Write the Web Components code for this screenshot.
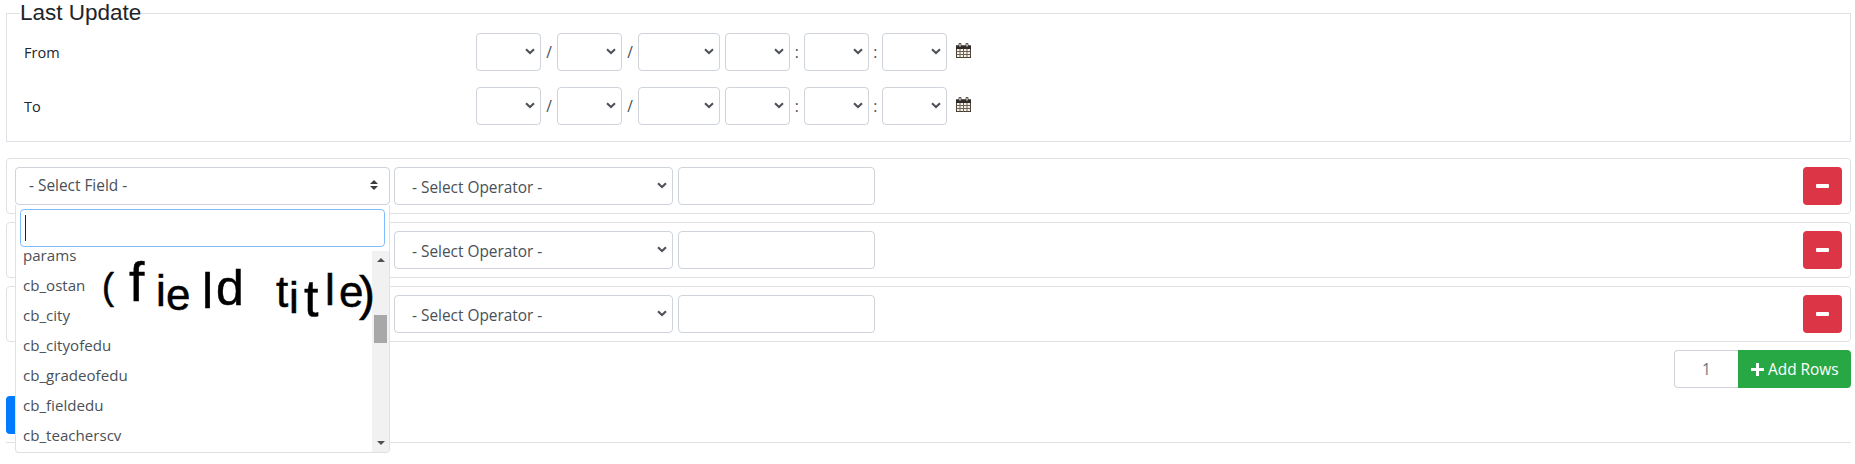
<!DOCTYPE html>
<html>
<head>
<meta charset="utf-8">
<title>Filter</title>
<style>
  html, body { margin: 0; background: #fff; }
  body { font-family: "Open Sans", "Noto Sans", sans-serif; font-size: 15.4px; color: #212529; width: 1855px; height: 464px; overflow: hidden; }
  .page { display: flex; flex-direction: column; padding: 0 4px 0 6px; }
</style>
</head>
<body>
<div class="page">
  <date-fieldset legend="Last Update">
    <date-row label="From"></date-row>
    <date-row label="To"></date-row>
  </date-fieldset>
  <filter-list>
    <filter-row open></filter-row>
    <filter-row></filter-row>
    <filter-row></filter-row>
  </filter-list>
  <add-rows></add-rows>
  <submit-bar></submit-bar>
</div>

<script>
const CHEVRON = `<svg width="10" height="7" viewBox="0 0 10 7"><path d="M1 1.2 L5 5 L9 1.2" fill="none" stroke="#4c5157" stroke-width="2"/></svg>`;

class PlainSelect extends HTMLElement {
  connectedCallback() {
    this.attachShadow({ mode: 'open' });
    const text = this.getAttribute('text') || '';
    this.shadowRoot.innerHTML = `
      <style>
        :host { display: flex; box-sizing: border-box; height: 38px; border: 1px solid #ced4da; border-radius: 4px;
          align-items: center; justify-content: space-between; padding: 0 5px 0 17px; color: #495057; background: #fff; }
        span { position: relative; top: 1px; }
        svg { display: block; position: relative; top: -1px; }
      </style>
      <span>${text}</span>${CHEVRON}`;
  }
}
customElements.define('plain-select', PlainSelect);

class DateFieldset extends HTMLElement {
  connectedCallback() {
    this.attachShadow({ mode: 'open' });
    this.shadowRoot.innerHTML = `
      <style>
        :host { display: block; }
        fieldset { margin: 0; padding: 7px 13px 0; border: 1px solid #dee2e6; min-width: 0; }
        legend { padding: 0; font-family: "Liberation Sans", sans-serif; font-size: 22.5px; line-height: 26px; color: #212529; }
      </style>
      <fieldset>
        <legend>${this.getAttribute('legend')}</legend>
        <slot></slot>
      </fieldset>`;
  }
}
customElements.define('date-fieldset', DateFieldset);

class DateRow extends HTMLElement {
  connectedCallback() {
    this.attachShadow({ mode: 'open' });
    this.shadowRoot.innerHTML = `
      <style>
        :host { display: flex; align-items: center; height: 38px; margin-bottom: 16px; }
        label { width: 456px; padding-left: 4px; box-sizing: border-box; font-size: 14.5px; }
        plain-select { width: 65px; flex: none; }
        plain-select.y { width: 82px; margin-right: 5px; }
        .sep { flex: none; width: 16px; text-align: center; color: #495057; }
        .sep.c { width: 13.5px; }
        svg { margin: -3px 0 0 9px; display: block; }
      </style>
      <label>${this.getAttribute('label')}</label>
      <plain-select></plain-select><span class="sep">/</span>
      <plain-select></plain-select><span class="sep">/</span>
      <plain-select class="y"></plain-select>
      <plain-select></plain-select><span class="sep c">:</span>
      <plain-select></plain-select><span class="sep c">:</span>
      <plain-select></plain-select>
      <svg width="15" height="15" viewBox="0 0 15 15">
        <rect x=".5" y="3" width="14" height="11.5" fill="#f6f1e6" stroke="#4a3f33"/>
        <rect x="0" y="2.5" width="15" height="3.5" fill="#2f2a26"/>
        <path d="M3 .5 H5 V4 H3 Z M10 .5 H12 V4 H10 Z" fill="#f4ecec" stroke="#3a3029" stroke-width=".8"/>
        <path d="M.5 8.5 H14.5 M.5 11.5 H14.5 M4 6 V14.5 M7.5 6 V14.5 M11 6 V14.5" stroke="#6e6258" stroke-width="1"/>
      </svg>`;
  }
}
customElements.define('date-row', DateRow);

class FilterList extends HTMLElement {
  connectedCallback() {
    this.attachShadow({ mode: 'open' });
    this.shadowRoot.innerHTML = `
      <style>:host { display: flex; flex-direction: column; gap: 8px; margin-top: 16px; }</style>
      <slot></slot>`;
  }
}
customElements.define('filter-list', FilterList);

class FieldDropdown extends HTMLElement {
  connectedCallback() {
    this.attachShadow({ mode: 'open' });
    const opts = ['params', 'cb_ostan', 'cb_city', 'cb_cityofedu', 'cb_gradeofedu', 'cb_fieldedu', 'cb_teacherscv'];
    this.shadowRoot.innerHTML = `
      <style>
        :host { display: flex; flex-direction: column; position: absolute; left: -1px; top: 37px; width: 375px; height: 248px;
          box-sizing: border-box; border: 1px solid #dee2e6; border-top: 0; border-radius: 0 0 4px 4px; background: #fff; z-index: 5; overflow: hidden; }
        .search { flex: none; box-sizing: border-box; height: 38px; margin: 4px 4px 4px; border: 1px solid #80bdff; border-radius: 4px; padding: 5px 4px; background: #fff; }
        .caret { display: block; width: 1px; height: 26px; background: #212529; }
        .body { flex: 1; display: flex; min-height: 0; }
        ul { flex: 1; list-style: none; margin: -11px 0 0; padding: 0; position: relative; z-index: -1; font-size: 15.1px; }
        li { height: 30px; line-height: 30px; padding-left: 7px; color: #495057; }
        .bar { flex: none; width: 17px; background: #f1f1f1; display: flex; flex-direction: column; align-items: center; position: relative; }
        .up, .down { flex: none; width: 0; height: 0; border-left: 4px solid transparent; border-right: 4px solid transparent; }
        .up { border-bottom: 4px solid #505050; margin-top: 7px; }
        .thumb { flex: none; width: 13px; height: 28px; background: #a8a8a8; margin-top: 53px; }
        .down { border-top: 4px solid #505050; margin-top: auto; margin-bottom: 7px; }
        svg { position: absolute; left: 80px; top: 50px; overflow: visible; z-index: 2; }
        text { font-family: "Liberation Sans", sans-serif; font-size: 44px; fill: #000; stroke: #000; stroke-width: .5px; }
      </style>
      <div class="search"><span class="caret"></span></div>
      <div class="body">
        <ul>${opts.map(o => `<li>${o}</li>`).join('')}</ul>
        <div class="bar"><i class="up"></i><i class="thumb"></i><i class="down"></i></div>
      </div>
      <svg width="290" height="70" viewBox="0 0 290 70">
        <text><tspan x="6" y="44" font-size="36">(</tspan><tspan x="33" y="46" font-size="55">f</tspan><tspan x="60" y="51">i</tspan><tspan x="70" y="55">e</tspan><tspan x="106" y="53" font-size="50">l</tspan><tspan x="120" y="50" font-size="50">d</tspan><tspan x="170" y="52"> </tspan><tspan x="180" y="52">t</tspan><tspan x="193" y="58">i</tspan><tspan x="208" y="61" font-size="52">t</tspan><tspan x="229" y="50">l</tspan><tspan x="243" y="52">e</tspan><tspan x="263" y="55" font-size="48">)</tspan></text>
      </svg>`;
  }
}
customElements.define('field-dropdown', FieldDropdown);

class FilterRow extends HTMLElement {
  connectedCallback() {
    this.attachShadow({ mode: 'open' });
    const open = this.hasAttribute('open');
    this.shadowRoot.innerHTML = `
      <style>
        :host { display: flex; box-sizing: border-box; height: 56px; border: 1px solid #dee2e6; border-radius: 4px; padding: 8px; align-items: center; }
        .field { flex: none; position: relative; box-sizing: border-box; width: 375px; height: 38px; border: 1px solid #ced4da; border-radius: 4px;
          display: flex; align-items: center; justify-content: space-between; padding: 0 11px 0 13px; color: #495057; }
        .field span { position: relative; top: -1px; }
        .arrows { display: flex; flex-direction: column; gap: 2px; position: relative; top: -1px; }
        .arrows i { display: block; width: 0; height: 0; border-left: 4px solid transparent; border-right: 4px solid transparent; }
        .arrows i:first-child { border-bottom: 4px solid #3c3c3c; }
        .arrows i:last-child { border-top: 4px solid #3c3c3c; }
        plain-select { flex: none; width: 279px; margin-left: 4px; }
        input { flex: none; box-sizing: border-box; width: 197px; height: 38px; margin: 0 0 0 5px; border: 1px solid #ced4da; border-radius: 4px; }
        button { flex: none; margin-left: auto; box-sizing: border-box; width: 39px; height: 38px; padding: 0; border: 0; border-radius: 4px; background: #dc3545;
          display: flex; align-items: center; justify-content: center; }
        button i { display: block; width: 13px; height: 4px; background: #fff; border-radius: 1px; }
      </style>
      <div class="field">
        ${open ? `<span>- Select Field -</span><div class="arrows"><i></i><i></i></div><field-dropdown></field-dropdown>` : ''}
      </div>
      <plain-select text="- Select Operator -"></plain-select>
      <input type="text">
      <button type="button"><i></i></button>`;
  }
}
customElements.define('filter-row', FilterRow);

class AddRows extends HTMLElement {
  connectedCallback() {
    this.attachShadow({ mode: 'open' });
    this.shadowRoot.innerHTML = `
      <style>
        :host { display: flex; justify-content: flex-end; height: 38px; margin-top: 8px; }
        .num { box-sizing: border-box; width: 64px; height: 38px; border: 1px solid #ced4da; border-right: 0; border-radius: 4px 0 0 4px;
          display: flex; align-items: center; justify-content: center; color: #6c757d; }
        .btn { box-sizing: border-box; width: 113px; height: 38px; background: #28a745; color: #fff; border-radius: 0 4px 4px 0;
          display: flex; align-items: center; padding-left: 13px; gap: 4px; }
      </style>
      <span class="num">1</span>
      <span class="btn">
        <svg width="13" height="13" viewBox="0 0 13 13"><path d="M5 0 H8 V5 H13 V8 H8 V13 H5 V8 H0 V5 H5 Z" fill="#fff"/></svg>
        Add Rows
      </span>`;
  }
}
customElements.define('add-rows', AddRows);

class SubmitBar extends HTMLElement {
  connectedCallback() {
    this.attachShadow({ mode: 'open' });
    this.shadowRoot.innerHTML = `
      <style>
        :host { display: block; margin-top: 8px; padding-bottom: 8px; border-bottom: 1px solid #dee2e6; }
        div { width: 90px; height: 38px; background: #007bff; border-radius: 4px; }
      </style>
      <div></div>`;
  }
}
customElements.define('submit-bar', SubmitBar);
</script>
</body>
</html>
